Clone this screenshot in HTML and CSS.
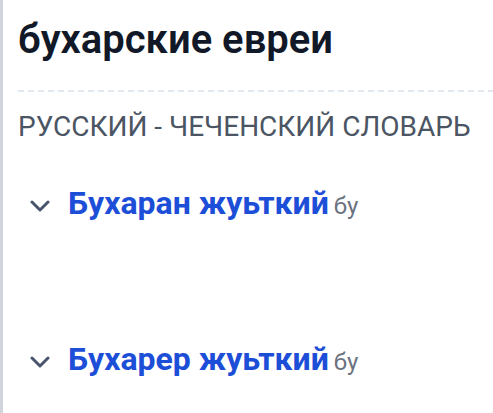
FILE: index.html
```html
<!DOCTYPE html>
<html lang="ru">
<head>
  <meta charset="UTF-8">
  <title>бухарские евреи</title>
  <link rel="stylesheet" href="styles.css">
</head>
<body>
  <div class="page">
    <h1 class="title">бухарские евреи</h1>
    <div class="divider"></div>
    <h2 class="dict">РУССКИЙ - ЧЕЧЕНСКИЙ СЛОВАРЬ</h2>

    <!-- переводы -->
    <ul class="entries">
      <li class="entry">
        <span class="chevron">
          <svg width="20" height="12" viewBox="0 0 20 12"><path d="M2 2l8 8 8-8" fill="none" stroke="#475569" stroke-width="3" stroke-linecap="round" stroke-linejoin="round"/></svg>
        </span>
        <span class="label">
          <a class="word">Бухаран жуьткий</a>
          <span class="lang">бу</span>
        </span>
      </li>
      <li class="entry">
        <span class="chevron">
          <svg width="20" height="12" viewBox="0 0 20 12"><path d="M2 2l8 8 8-8" fill="none" stroke="#475569" stroke-width="3" stroke-linecap="round" stroke-linejoin="round"/></svg>
        </span>
        <span class="label">
          <a class="word">Бухарер жуьткий</a>
          <span class="lang">бу</span>
        </span>
      </li>
    </ul>
  </div>
</body>
</html>
```

FILE: styles.css
```css
* {
  box-sizing: border-box;
}

body {
  margin: 0;
  background: #fff;
  font-family: Roboto, "Noto Sans", sans-serif;
}

.page {
  border-left: 3px solid #d1d5db;
  padding: 16px 0 0 15px;
  height: 413px;
  overflow: hidden;
}

.title {
  margin: 0;
  font-size: 40px;
  font-weight: 600;
  line-height: 48px;
  color: #111827;
}

.divider {
  margin-top: 26px;
  height: 2px;
  background: repeating-linear-gradient(to right, #e2e8f0 0 6px, transparent 6px 10px);
}

.dict {
  margin: 17px 0 0;
  font-size: 28px;
  font-weight: 400;
  line-height: 36px;
  color: #4b5563;
  white-space: nowrap;
}

.entries {
  list-style: none;
  margin: 41px 0 0;
  padding: 0;
}

/* строка перевода */
.entry {
  display: flex;
  align-items: center;
  padding-left: 12px;
  height: 40px;
  margin-bottom: 116px;
}

.chevron {
  display: flex;
  width: 38px;
}

.label {
  line-height: 40px;
  white-space: nowrap;
}

.word {
  font-size: 32px;
  font-weight: 700;
  color: #1d4ed8;
}

.lang {
  margin-left: 1px;
  font-size: 24px;
  color: #6b7280;
}
```
